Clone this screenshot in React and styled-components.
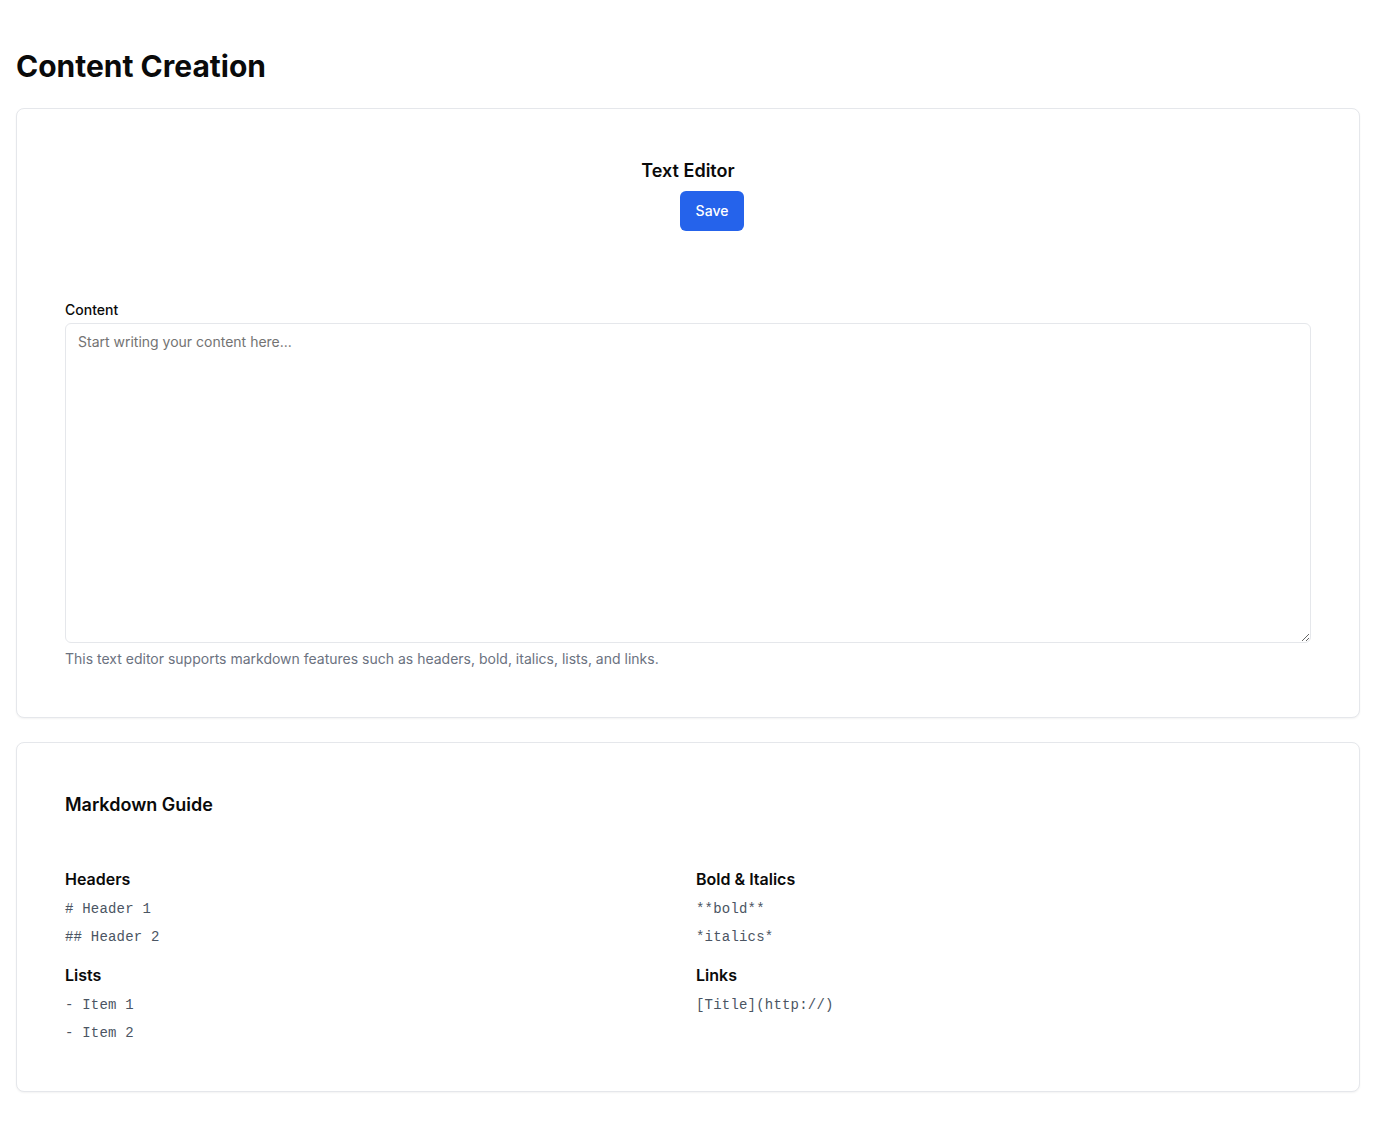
import React from "react";
import styled, { createGlobalStyle } from "styled-components";

const Global = createGlobalStyle`
  * { box-sizing: border-box; }
  html, body { margin: 0; padding: 0; background: #ffffff; }
  body { font-family: Inter, "Noto Sans", "Liberation Sans", sans-serif; color: #0a0a0a; }
`;

const Page = styled.main`
  padding: 48px 16px 48px;
  display: flex;
  flex-direction: column;
`;

const PageTitle = styled.h1`
  margin: 0 0 24px;
  font-size: 30px;
  line-height: 36px;
  font-weight: 700;
  color: #0a0a0a;
`;

const Card = styled.section`
  border: 1px solid #e5e7eb;
  border-radius: 8px;
  background: #fff;
  box-shadow: 0 1px 2px rgba(0, 0, 0, 0.05);
  padding: 48px;
  margin-bottom: ${(p) => (p.$last ? "0" : "24px")};
`;

const EditorHeader = styled.header`
  display: flex;
  flex-direction: column;
  align-items: center;
  gap: 6px;
  margin-bottom: 69px;
`;

const CardTitle = styled.h2`
  margin: 0;
  font-size: 18px;
  line-height: 28px;
  font-weight: 600;
  color: #0a0a0a;
  align-self: ${(p) => (p.$left ? "flex-start" : "center")};
`;

const ActionRow = styled.div`
  display: flex;
  align-items: center;
  padding-left: 48px;
`;

const Button = styled.button`
  height: 40px;
  padding: 0 16px 1px;
  border: none;
  border-radius: 6px;
  background: #2563eb;
  color: #fff;
  font-family: inherit;
  font-size: 14px;
  line-height: 20px;
  font-weight: 500;
  cursor: pointer;
`;

const Label = styled.label`
  display: block;
  font-size: 14px;
  line-height: 20px;
  font-weight: 500;
  color: #0a0a0a;
  margin-bottom: 3px;
`;

const TextArea = styled.textarea`
  display: block;
  width: 100%;
  height: 320px;
  padding: 8px 12px;
  border: 1px solid #e5e7eb;
  border-radius: 6px;
  font-family: inherit;
  font-size: 14px;
  line-height: 20px;
  color: #0a0a0a;
  resize: vertical;
  outline: none;
  &::placeholder { color: #737373; }
`;

const Help = styled.p`
  margin: 6px 0 0;
  font-size: 14px;
  line-height: 20px;
  color: #6b7280;
`;

const GuideGrid = styled.div`
  margin-top: 48px;
  display: grid;
  grid-template-columns: 1fr 1fr;
  column-gap: 16px;
`;

const Column = styled.div`
  display: flex;
  flex-direction: column;
  gap: 16px;
`;

const Section = styled.div`
  display: flex;
  flex-direction: column;
  gap: 8px;
`;

const SectionTitle = styled.h3`
  margin: 0;
  font-size: 16px;
  line-height: 24px;
  font-weight: 600;
  color: #0a0a0a;
`;

const Code = styled.code`
  display: block;
  padding-top: 1px;
  font-family: "Liberation Mono", "DejaVu Sans Mono", monospace;
  font-size: 14px;
  line-height: 19px;
  letter-spacing: 0.2px;
  color: #4b5563;
`;

const guide = [
  [
    { title: "Headers", items: ["# Header 1", "## Header 2"] },
    { title: "Lists", items: ["- Item 1", "- Item 2"] },
  ],
  [
    { title: "Bold & Italics", items: ["**bold**", "*italics*"] },
    { title: "Links", items: ["[Title](http://)"] },
  ],
];

export default function App() {
  return (
    <>
      <Global />
      <Page>
        <PageTitle>Content Creation</PageTitle>
        <Card>
          <EditorHeader>
            <CardTitle>Text Editor</CardTitle>
            <ActionRow>
              <Button>Save</Button>
            </ActionRow>
          </EditorHeader>
          <Label htmlFor="content">Content</Label>
          <TextArea id="content" placeholder="Start writing your content here..." />
          <Help>This text editor supports markdown features such as headers, bold, italics, lists, and links.</Help>
        </Card>
        <Card $last>
          <CardTitle $left>Markdown Guide</CardTitle>
          <GuideGrid>
            {guide.map((col, i) => (
              <Column key={i}>
                {col.map((s) => (
                  <Section key={s.title}>
                    <SectionTitle>{s.title}</SectionTitle>
                    {s.items.map((it) => (
                      <Code key={it}>{it}</Code>
                    ))}
                  </Section>
                ))}
              </Column>
            ))}
          </GuideGrid>
        </Card>
      </Page>
    </>
  );
}
